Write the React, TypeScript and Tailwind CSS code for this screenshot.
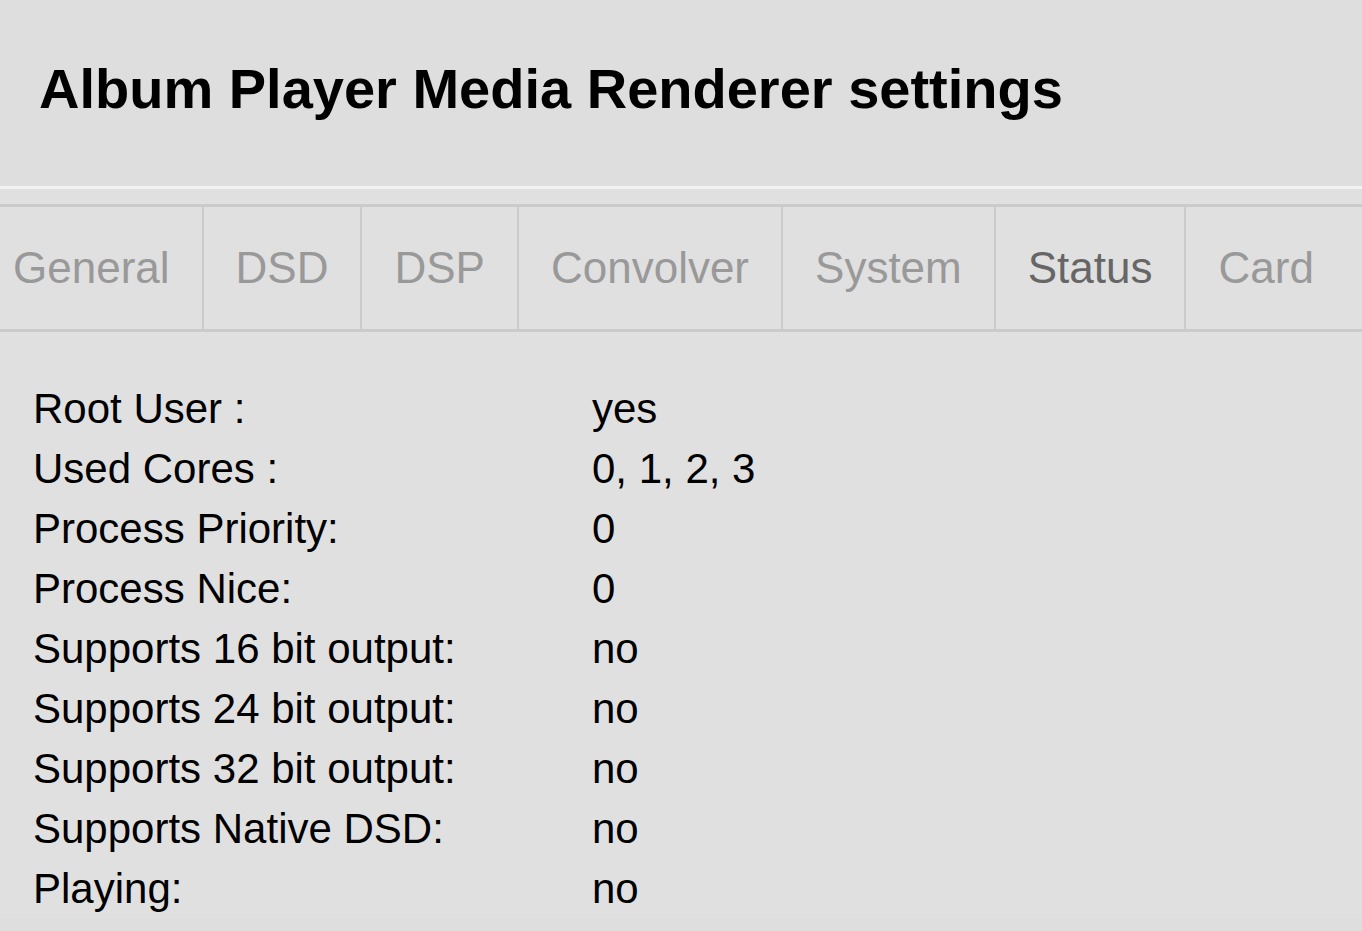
import React from "react";

const tabs = ["General", "DSD", "DSP", "Convolver", "System", "Status", "Card"];
const rows: [string, string][] = [
  ["Root User :", "yes"],
  ["Used Cores :", "0, 1, 2, 3"],
  ["Process Priority:", "0"],
  ["Process Nice:", "0"],
  ["Supports 16 bit output:", "no"],
  ["Supports 24 bit output:", "no"],
  ["Supports 32 bit output:", "no"],
  ["Supports Native DSD:", "no"],
  ["Playing:", "no"],
];

export default function App() {
  return (
    <div
      className="w-[1362px] h-[931px] overflow-hidden bg-[#dedede] text-black"
      style={{ fontFamily: '"Liberation Sans", Arial, sans-serif' }}
    >
      <div className="h-[186px] pl-[39px] pt-[57px]">
        <h1 className="text-[56px] font-bold leading-[64px]">Album Player Media Renderer settings</h1>
      </div>
      <div className="h-[3px] bg-[#f2f2f2]" />
      <div className="h-[15px] bg-[#e0e0e0]" />
      <div className="flex h-[128px] border-y-[3px] border-[#cbcbcb] bg-[#e0e0e0]">
        {tabs.map((t, i) => (
          <div
            key={t}
            className={
              "flex items-center text-[44px] leading-none " +
              (i === 0 ? "pl-[13px] pr-[32px] " : "px-[32px] ") +
              (i < tabs.length - 1 ? "border-r-[2px] border-[#cbcbcb] " : "") +
              (t === "Status" ? "text-[#666666]" : "text-[#999999]")
            }
          >
            {t}
          </div>
        ))}
      </div>
      <div className="bg-[#e0e0e0] pt-[47px] pl-[33px]">
        {rows.map(([k, v]) => (
          <div key={k} className="flex h-[60px] items-center text-[42px] leading-none">
            <div className="w-[559px]">{k}</div>
            <div>{v}</div>
          </div>
        ))}
      </div>
    </div>
  );
}
